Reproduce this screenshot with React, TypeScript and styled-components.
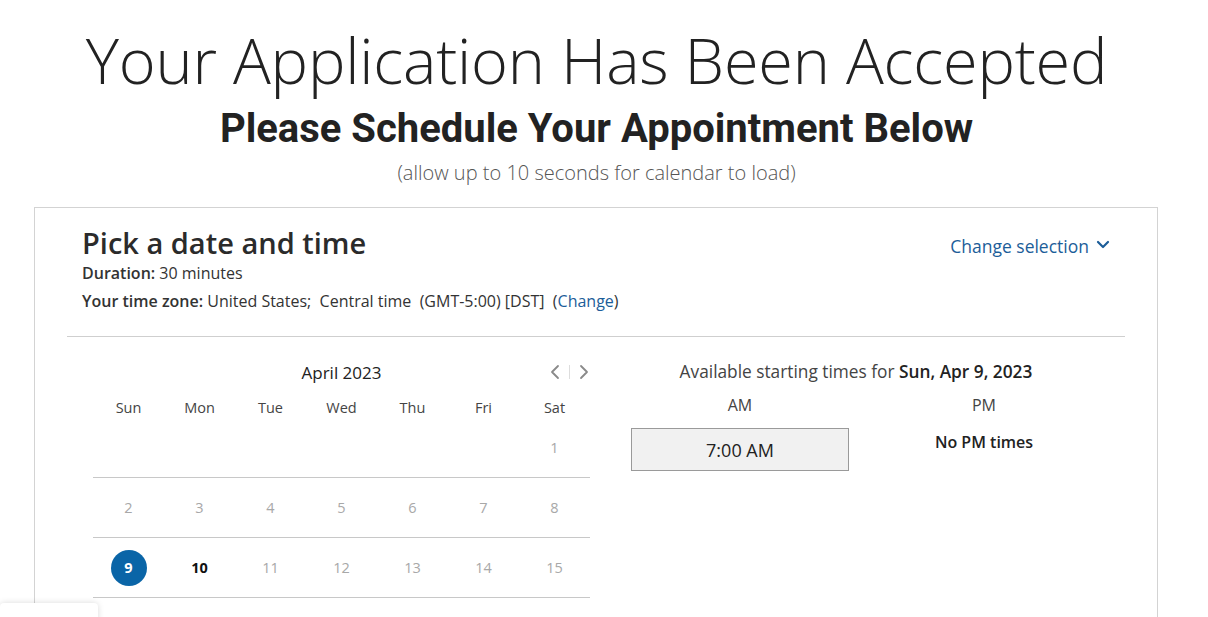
import React from 'react'
import styled, { createGlobalStyle } from 'styled-components'

const GlobalStyle = createGlobalStyle`
  html, body {
    margin: 0;
    padding: 0;
    background: #fff;
    font-family: 'Open Sans', 'Liberation Sans', sans-serif;
    color: #333;
    overflow: hidden;
  }
`

const Page = styled.main`
  width: 1208px;
  height: 617px;
  overflow: hidden;
  position: relative;
`

const Heading = styled.header`
  display: flex;
  flex-direction: column;
  align-items: center;
  padding: 16px 15px 0 0;
`

const Title = styled.h1`
  margin: 0;
  font-family: 'Open Sans', sans-serif;
  font-weight: 300;
  font-size: 63px;
  line-height: 88px;
  color: #222;
  letter-spacing: -0.2px;
`

const Subtitle = styled.h2`
  margin: 0;
  font-family: Roboto, sans-serif;
  font-weight: 700;
  font-size: 40px;
  line-height: 50px;
  color: #222;
`

const Note = styled.p`
  margin: 6px 0 0;
  font-weight: 300;
  font-size: 20px;
  line-height: 26px;
  color: #555;
`

const Card = styled.section`
  margin: 21px 0 0 34px;
  width: 1124px;
  height: 420px;
  border: 1px solid #d3d3d3;
  border-bottom: none;
  box-sizing: border-box;
  padding: 0 32px;
`

const CardHead = styled.div`
  display: flex;
  justify-content: space-between;
  align-items: flex-start;
  padding: 16px 15px 24px;
  border-bottom: 1px solid #cfcfcf;
`

const HeadLeft = styled.div`
  display: flex;
  flex-direction: column;
`

const CardTitle = styled.h3`
  margin: 0;
  font-weight: 600;
  font-size: 29px;
  line-height: 38px;
  color: #2b2b2b;
`

const Meta = styled.div<{ $gap: number }>`
  font-size: 16px;
  line-height: 22px;
  color: #333;
  margin-top: ${(p) => p.$gap}px;

  b {
    font-weight: 600;
  }
`

const Link = styled.a`
  color: #1c5d99;
  text-decoration: none;
  cursor: pointer;
`

const ChangeSel = styled(Link)`
  display: flex;
  align-items: center;
  gap: 7px;
  font-size: 17.5px;
  line-height: 24px;
  margin-top: 10px;
`

const Body = styled.div`
  display: flex;
  padding: 23px 0 0 26px;
  gap: 41px;
`

const Calendar = styled.div`
  width: 497px;
`

const MonthBar = styled.div`
  display: flex;
  align-items: center;
  position: relative;
  height: 24px;
  justify-content: center;
  font-size: 17px;
  color: #222;
`

const Nav = styled.div`
  position: absolute;
  right: 0;
  top: 0;
  display: flex;
  align-items: center;
  gap: 8px;
  height: 24px;
  color: #8a8a8a;
`

const NavSep = styled.span`
  width: 1px;
  height: 14px;
  background: #ddd;
`

const Grid = styled.div`
  display: grid;
  grid-template-columns: repeat(7, 1fr);
`

const DayName = styled.div`
  text-align: center;
  font-size: 14.5px;
  line-height: 20px;
  color: #444;
  margin-top: 14px;
`

const Week = styled.div`
  display: grid;
  grid-template-columns: repeat(7, 1fr);
  height: 59px;
  border-bottom: 1px solid #c8c8c8;
  align-items: center;
  &:first-of-type {
    height: 49px;
  }
`

type Kind = 'muted' | 'active' | 'selected' | 'empty'

const Day = styled.div<{ $kind: Kind }>`
  display: flex;
  justify-content: center;
  align-items: center;
  font-size: 14.5px;
  color: ${(p) => (p.$kind === 'active' ? '#111' : p.$kind === 'selected' ? '#fff' : '#a8a8a8')};
  font-weight: ${(p) => (p.$kind === 'muted' || p.$kind === 'empty' ? 400 : 700)};
`

const Circle = styled.span`
  width: 36px;
  height: 36px;
  border-radius: 50%;
  background: #0a65a7;
  display: flex;
  align-items: center;
  justify-content: center;
  color: #fff;
  font-weight: 700;
`

const Times = styled.div`
  width: 462px;
  display: flex;
  flex-direction: column;
`

const TimesHead = styled.div`
  text-align: center;
  font-size: 17.3px;
  line-height: 24px;
  color: #444;
  padding-right: 12px;

  b {
    font-weight: 600;
    color: #222;
  }
`

const Cols = styled.div`
  display: grid;
  grid-template-columns: 218px 218px;
  column-gap: 26px;
  margin-top: 11px;
`

const ColHead = styled.div`
  text-align: center;
  font-size: 16px;
  line-height: 20px;
  color: #444;
`

const Slot = styled.button`
  margin-top: 13px;
  height: 43px;
  border: 1px solid #9a9a9a;
  background: #f1f1f1;
  font-family: 'Open Sans', sans-serif;
  font-size: 18px;
  color: #222;
  cursor: pointer;
`

const NoTimes = styled.div`
  margin-top: 16px;
  text-align: center;
  font-size: 16px;
  font-weight: 600;
  color: #222;
`

const Widget = styled.div`
  position: absolute;
  left: 0;
  bottom: -20px;
  width: 98px;
  height: 34px;
  background: #fff;
  border-radius: 4px;
  box-shadow: 0 0 6px rgba(0, 0, 0, 0.15);
`

const Chevron = ({ dir }: { dir: 'left' | 'right' | 'down' }) => {
  const d = dir === 'left' ? 'M9 2 L3 8 L9 14' : dir === 'right' ? 'M3 2 L9 8 L3 14' : 'M2 4 L7 9 L12 4'
  const w = dir === 'down' ? 14 : 12
  return (
    <svg width={w} height={16} viewBox={`0 0 ${w} 16`} fill="none">
      <path d={d} stroke="currentColor" strokeWidth={dir === 'down' ? 2.2 : 1.8} strokeLinecap="round" strokeLinejoin="round" />
    </svg>
  )
}

const weeks: { n: string; k: Kind }[][] = [
  [...Array(6)].map(() => ({ n: '', k: 'empty' as Kind })).concat([{ n: '1', k: 'muted' }]),
  ['2', '3', '4', '5', '6', '7', '8'].map((n) => ({ n, k: 'muted' as Kind })),
  [
    { n: '9', k: 'selected' },
    { n: '10', k: 'active' },
    ...['11', '12', '13', '14', '15'].map((n) => ({ n, k: 'muted' as Kind })),
  ],
]

const days = ['Sun', 'Mon', 'Tue', 'Wed', 'Thu', 'Fri', 'Sat']

export default function App() {
  return (
    <Page>
      <GlobalStyle />
      <Heading>
        <Title>Your Application Has Been Accepted</Title>
        <Subtitle>Please Schedule Your Appointment Below</Subtitle>
        <Note>(allow up to 10 seconds for calendar to load)</Note>
      </Heading>
      <Card>
        <CardHead>
          <HeadLeft>
            <CardTitle>Pick a date and time</CardTitle>
            <Meta $gap={0}>
              <b>Duration:</b> 30 minutes
            </Meta>
            <Meta $gap={6}>
              <b>Your time zone:</b> United States;&nbsp; Central time&nbsp; (GMT-5:00) [DST]&nbsp; (<Link>Change</Link>)
            </Meta>
          </HeadLeft>
          <ChangeSel>
            Change selection <Chevron dir="down" />
          </ChangeSel>
        </CardHead>
        <Body>
          <Calendar>
            <MonthBar>
              April 2023
              <Nav>
                <Chevron dir="left" />
                <NavSep />
                <Chevron dir="right" />
              </Nav>
            </MonthBar>
            <Grid>
              {days.map((d) => (
                <DayName key={d}>{d}</DayName>
              ))}
            </Grid>
            {weeks.map((w, i) => (
              <Week key={i}>
                {w.map((c, j) => (
                  <Day key={j} $kind={c.k}>
                    {c.k === 'selected' ? <Circle>{c.n}</Circle> : c.n}
                  </Day>
                ))}
              </Week>
            ))}
          </Calendar>
          <Times>
            <TimesHead>
              Available starting times for <b>Sun, Apr 9, 2023</b>
            </TimesHead>
            <Cols>
              <ColHead>AM</ColHead>
              <ColHead>PM</ColHead>
              <Slot>7:00 AM</Slot>
              <NoTimes>No PM times</NoTimes>
            </Cols>
          </Times>
        </Body>
      </Card>
      <Widget />
    </Page>
  )
}
